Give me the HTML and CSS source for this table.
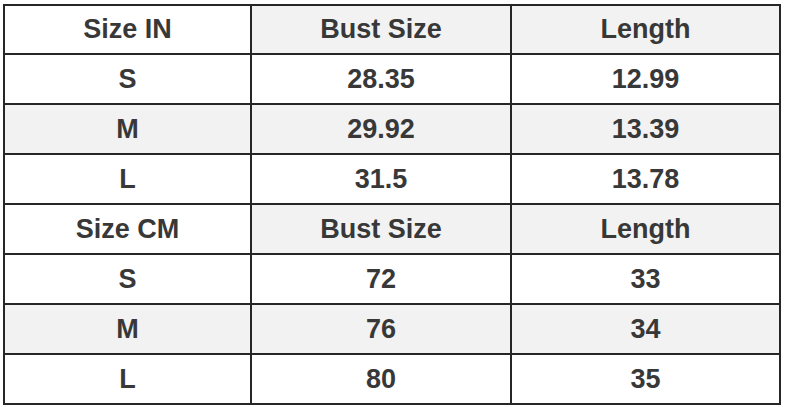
FILE: index.html
```html
<!DOCTYPE html>
<html>
<head>
<meta charset="utf-8">
<link rel="stylesheet" href="styles.css">
</head>
<body>
<div class="wrap">
<table class="size-table">
  <colgroup>
    <col class="c1"><col class="c2"><col class="c3">
  </colgroup>
  <tr class="first"><td>Size IN</td><td class="g">Bust Size</td><td class="g">Length</td></tr>
  <tr><td>S</td><td>28.35</td><td>12.99</td></tr>
  <tr class="g"><td>M</td><td>29.92</td><td>13.39</td></tr>
  <tr><td>L</td><td>31.5</td><td>13.78</td></tr>
  <tr><td>Size CM</td><td class="g">Bust Size</td><td class="g">Length</td></tr>
  <tr><td>S</td><td>72</td><td>33</td></tr>
  <tr class="g"><td>M</td><td>76</td><td>34</td></tr>
  <tr><td>L</td><td>80</td><td>35</td></tr>
</table>
</div>
</body>
</html>
```

FILE: styles.css
```css
html, body {
  margin: 0;
  padding: 0;
  background: #ffffff;
}
.wrap {
  padding: 4px 0 0 3px;
}
.size-table {
  border-collapse: collapse;
  width: 776px;
  table-layout: fixed;
  font-family: "Liberation Sans", Arial, sans-serif;
  font-weight: bold;
  font-size: 27px;
  color: #383838;
}
.c1 { width: 247px; }
.c2 { width: 260px; }
.c3 { width: 269px; }
.size-table td {
  border: 2px solid #262626;
  height: 48px;
  padding: 0;
  text-align: center;
  vertical-align: middle;
  line-height: 1;
}
.size-table tr.first td {
  height: 47px;
}
.size-table .g,
.size-table tr.g td {
  background: #f2f2f2;
}
```
